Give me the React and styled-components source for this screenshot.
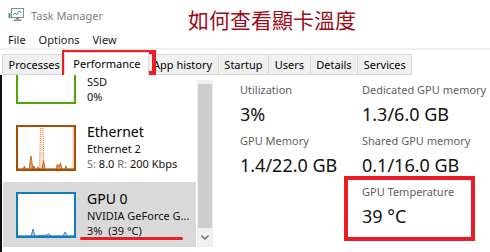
import React from "react";
import styled, { createGlobalStyle } from "styled-components";

const GlobalStyle = createGlobalStyle`
  html, body {
    margin: 0;
    padding: 0;
    background: #fff;
  }
  body {
    font-family: "Noto Sans", "Liberation Sans", sans-serif;
  }
`;

const Window = styled.div`
  position: relative;
  width: 490px;
  height: 252px;
  overflow: hidden;
  background: #fff;
  color: #000;
`;

const TitleBar = styled.div`
  height: 30px;
  display: flex;
  align-items: center;
  padding-left: 8px;
  gap: 7px;
  font-size: 11px;
  color: #808080;
`;

const Caption = styled.div`
  position: absolute;
  left: 188px;
  top: 5px;
  font-family: "Noto Sans CJK TC", "Noto Sans CJK SC", sans-serif;
  font-size: 21px;
  line-height: 28px;
  color: #9b0d1b;
`;

const MenuBar = styled.div`
  height: 18px;
  display: flex;
  align-items: center;
  padding-left: 8px;
  gap: 13px;
  font-size: 11px;
  color: #1a1a1a;
  border-bottom: 2px solid #f0f0f0;
`;

const TabBar = styled.div`
  height: 25px;
  display: flex;
  align-items: flex-end;
  padding-left: 2px;
`;

const Tab = styled.div`
  position: relative;
  box-sizing: border-box;
  height: ${(p) => (p.$active ? "23px" : "21px")};
  padding: 0 ${(p) => (p.$active ? "8px" : "5.6px")};
  margin: 0 ${(p) => (p.$active ? "-2px" : "0")};
  z-index: ${(p) => (p.$active ? 1 : 0)};
  display: flex;
  align-items: center;
  font-size: 11px;
  color: #000;
  background: ${(p) => (p.$active ? "#fff" : "#f0f0f0")};
  border: 1px solid #d9d9d9;
  border-left-width: ${(p) => (p.$first || p.$active ? "1px" : "0")};
  border-bottom-color: ${(p) => (p.$active ? "#fff" : "#d9d9d9")};
`;

const Body = styled.div`
  display: flex;
  height: 177px;
`;

const Sidebar = styled.div`
  display: flex;
  border-left: 2px solid #111;
`;

const List = styled.div`
  width: 195px;
  box-sizing: border-box;
  padding: 0 1px;
  overflow: hidden;
`;

const ListInner = styled.div`
  margin-top: -27px;
  display: flex;
  flex-direction: column;
  gap: 2px;
`;

const Item = styled.div`
  height: 65px;
  box-sizing: border-box;
  display: flex;
  gap: 11px;
  padding: 7px 0 0 13px;
  background: ${(p) => (p.$selected ? "#d9d9d9" : "transparent")};
`;

const Thumb = styled.div`
  flex: none;
  width: 60px;
  height: 46px;
  margin-top: 3px;
  box-sizing: border-box;
  border: 2px solid ${(p) => p.$color};
  background: #fff;
  display: flex;
  align-items: flex-end;

  svg {
    display: block;
  }
`;

const ItemText = styled.div`
  display: flex;
  flex-direction: column;
  min-width: 0;
`;

const ItemTitle = styled.div`
  font-size: 14px;
  line-height: 19px;
  color: #000;
`;

const ItemSub = styled.div`
  font-size: 11px;
  line-height: 15px;
  color: #111;
  white-space: pre;
`;

const Muted = styled.span`
  color: #707070;
`;

const ScrollTrack = styled.div`
  width: 16px;
  height: 167px;
  margin-top: 5px;
  background: #f0f0f0;
  display: flex;
  flex-direction: column;
  align-items: center;
`;

const ScrollThumb = styled.div`
  width: 14px;
  height: 144px;
  margin-top: 4px;
  background: #cdcdcd;
`;

const ScrollArrow = styled.div`
  flex: 1;
  display: flex;
  align-items: center;
  justify-content: center;
`;

const Details = styled.div`
  flex: 1;
  padding: 7px 0 0 27px;
  display: grid;
  grid-template-columns: 122px 1fr;
  grid-auto-rows: 44px;
  row-gap: 7px;
  align-content: start;
`;

const Stat = styled.div`
  display: flex;
  flex-direction: column;
  gap: 4px;
  grid-column: ${(p) => p.$col || "auto"};
`;

const StatLabel = styled.div`
  font-size: 11px;
  line-height: 16px;
  color: #5f5f5f;
  white-space: nowrap;
`;

const StatValue = styled.div`
  font-size: 18px;
  line-height: 24px;
  color: #111;
  white-space: nowrap;
`;

const Mark = styled.div`
  position: absolute;
  box-sizing: border-box;
  border: 4px solid #ec1c24;
  pointer-events: none;
`;

const Underline = styled.div`
  position: absolute;
  left: 80px;
  top: 237px;
  width: 103px;
  height: 3px;
  border-radius: 2px;
  background: #ec1c24;
`;

const AppIcon = () => (
  <svg width="16" height="14" viewBox="0 0 16 14">
    <rect x="0.5" y="5" width="2" height="5" fill="#3aa37a" />
    <rect x="3.5" y="0.5" width="12" height="9" fill="#fff" stroke="#8a8a8a" />
    <polyline points="5,7 7,5 9,6.5 11,3 13.5,4.5" fill="none" stroke="#2b8fd6" strokeWidth="1" />
    <rect x="8" y="10" width="3" height="1.5" fill="#8a8a8a" />
    <rect x="5.5" y="11.5" width="8" height="1.5" fill="#8a8a8a" />
  </svg>
);

const EthernetChart = () => (
  <svg width="56" height="42" viewBox="0 0 56 42">
    <path d="M21 42 L22.5 1 L25 1 L26.5 42 Z" fill="#fbe3d2" />
    <line x1="21.5" y1="42" x2="22.5" y2="1" stroke="#e58a52" strokeWidth="1" strokeDasharray="1 1" />
    <line x1="25" y1="1" x2="26" y2="42" stroke="#e58a52" strokeWidth="1" strokeDasharray="1 1" />
    <line x1="55" y1="0" x2="55" y2="42" stroke="#f0b590" strokeWidth="1" />
    <path
      d="M0 42 L5 42 L6.5 39 L8 42 L11 42 L13 29 L15 42 L16 39 L17.5 42 L19 42 L20 40 L21 42 L24 42 L25.5 34 L27 42 L38 42 L39.5 37 L41 40 L42.5 36 L44 42 L47 42 L48 39 L49 42 L56 42 Z"
      fill="#e79a66"
      stroke="#b0581c"
      strokeWidth="0.8"
    />
  </svg>
);

const GpuChart = () => (
  <svg width="56" height="42" viewBox="0 0 56 42">
    <path
      d="M0 42 L13 42 L15 35 L17 42 L29 41 L30.5 39.5 L32 41 L33 42 L45 42 L47 38 L49 41 L50 42 L56 42 Z"
      fill="#9ccbe8"
      stroke="#1a77c0"
      strokeWidth="0.8"
    />
  </svg>
);

const tabs = ["Processes", "Performance", "App history", "Startup", "Users", "Details", "Services"];

const stats = [
  { label: "Utilization", value: "3%" },
  { label: "Dedicated GPU memory", value: "1.3/6.0 GB" },
  { label: "GPU Memory", value: "1.4/22.0 GB" },
  { label: "Shared GPU memory", value: "0.1/16.0 GB" },
  { label: "GPU Temperature", value: "39 °C", col: "2" },
];

export default function App() {
  return (
    <Window>
      <GlobalStyle />
      <TitleBar>
        <AppIcon />
        <span>Task Manager</span>
      </TitleBar>
      <Caption>如何查看顯卡溫度</Caption>
      <MenuBar>
        <span>File</span>
        <span>Options</span>
        <span>View</span>
      </MenuBar>
      <TabBar>
        {tabs.map((t, i) => (
          <Tab key={t} $first={i === 0} $active={t === "Performance"}>
            {t}
          </Tab>
        ))}
      </TabBar>
      <Body>
        <Sidebar>
          <List>
            <ListInner>
              <Item>
                <Thumb $color="#4da60c" />
                <ItemText>
                  <ItemTitle>Disk 0 (C:)</ItemTitle>
                  <ItemSub>SSD</ItemSub>
                  <ItemSub>0%</ItemSub>
                </ItemText>
              </Item>
              <Item>
                <Thumb $color="#a74f01">
                  <EthernetChart />
                </Thumb>
                <ItemText>
                  <ItemTitle>Ethernet</ItemTitle>
                  <ItemSub>Ethernet 2</ItemSub>
                  <ItemSub>
                    <Muted>S:</Muted> 8.0 <Muted>R:</Muted> 200 Kbps
                  </ItemSub>
                </ItemText>
              </Item>
              <Item $selected>
                <Thumb $color="#117dbb">
                  <GpuChart />
                </Thumb>
                <ItemText>
                  <ItemTitle>GPU 0</ItemTitle>
                  <ItemSub>NVIDIA GeForce G...</ItemSub>
                  <ItemSub>{"3%  (39 °C)"}</ItemSub>
                </ItemText>
              </Item>
            </ListInner>
          </List>
          <ScrollTrack>
            <ScrollThumb />
            <ScrollArrow>
              <svg width="8" height="5" viewBox="0 0 8 5">
                <polyline points="0.5,0.5 4,4 7.5,0.5" fill="none" stroke="#606060" strokeWidth="1.3" />
              </svg>
            </ScrollArrow>
          </ScrollTrack>
        </Sidebar>
        <Details>
          {stats.map((s) => (
            <Stat key={s.label} $col={s.col}>
              <StatLabel>{s.label}</StatLabel>
              <StatValue>{s.value}</StatValue>
            </Stat>
          ))}
        </Details>
      </Body>
      <Mark style={{ left: 62, top: 50, width: 94, height: 25 }} />
      <Mark style={{ left: 344, top: 176, width: 131, height: 65 }} />
      <Underline />
    </Window>
  );
}
